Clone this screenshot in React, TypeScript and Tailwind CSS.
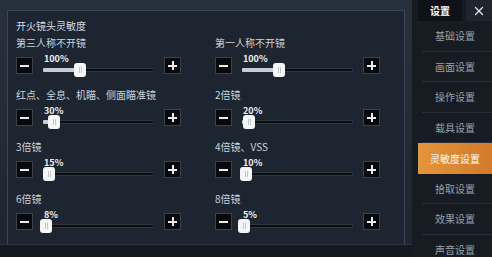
import { X } from 'lucide-react';

type Sens = { label: string; pct: number };

const rows: Sens[][] = [
    [{ label: '第三人称不开镜', pct: 100 }, { label: '第一人称不开镜', pct: 100 }],
    [{ label: '红点、全息、机瞄、侧面瞄准镜', pct: 30 }, { label: '2倍镜', pct: 20 }],
    [{ label: '3倍镜', pct: 15 }, { label: '4倍镜、VSS', pct: 10 }],
    [{ label: '6倍镜', pct: 8 }, { label: '8倍镜', pct: 5 }],
];

const menu = ['基础设置', '画面设置', '操作设置', '载具设置', '灵敏度设置', '拾取设置', '效果设置', '声音设置'];

const StepButton = ({ plus }: { plus?: boolean }) => (
    <div className="relative w-[17px] h-[17px] shrink-0 bg-[#07090c] border border-[#3b424b]">
        <span className="absolute left-[3px] right-[3px] top-[7px] h-[2px] bg-[#e8eaec]" />
        {plus && <span className="absolute top-[3px] bottom-[3px] left-[7px] w-[2px] bg-[#e8eaec]" />}
    </div>
);

const Slider = ({ item }: { item: Sens }) => {
    // slider range goes up to 300%
    const center = Math.round((111 * item.pct) / 300);
    return (
        <div className="flex flex-col gap-[7px]">
            <p className="h-[14px] leading-[14px] text-[10px] text-[#cfd3d8]">{item.label}</p>
            <div className="flex items-center gap-[10px] h-[17px]">
                <StepButton />
                <div className="relative w-[111px] h-[17px]">
                    <span className="absolute left-[1px] top-[-4px] text-[9px] font-bold text-[#eef0f2] leading-[12px]">{item.pct}%</span>
                    <div className="absolute left-0 right-0 top-[11px] h-[4px] bg-[#0a0c0f] border border-[#30363e] rounded-[1px]" />
                    <div className="absolute left-0 top-[11px] h-[4px] bg-[#c9cdd1] rounded-l-[1px]" style={{ width: center }} />
                    <div
                        className="absolute top-[6px] w-[12px] h-[14px] bg-[#f4f5f6] rounded-[3px] flex items-center justify-center gap-[1px]"
                        style={{ left: Math.max(center - 6, -5) }}
                    >
                        <span className="w-[1px] h-[6px] bg-[#c2c6cb]" />
                        <span className="w-[1px] h-[6px] bg-[#c2c6cb]" />
                    </div>
                </div>
                <StepButton plus />
            </div>
        </div>
    );
};

const App = () => {
    return (
        <div className="flex w-[492px] h-[257px] overflow-hidden bg-[#1b222c] font-['Noto_Sans_CJK_SC','Noto_Sans',sans-serif]">
            <main className="flex flex-col w-[412px] bg-gradient-to-b from-[#27313d] to-[#1d2530]">
                <div className="flex-1 flex flex-col mt-[10px] ml-[7px] mr-[7px] border-l border-t border-r border-[#3a4653] bg-[#1d2530]">
                    <h2 className="pl-[8px] pt-[9px] h-[25px] text-[10px] text-[#d9dde1] leading-[12px]">开火镜头灵敏度</h2>
                    <div className="flex flex-col">
                        {rows.map((pair, i) => (
                            <div key={i} className="flex gap-[34px] pl-[8px] h-[52px]">
                                <Slider item={pair[0]} />
                                <Slider item={pair[1]} />
                            </div>
                        ))}
                    </div>
                </div>
                <div className="h-[19px] bg-[#151a21] border-t border-[#2b333d]" />
            </main>

            <aside className="flex flex-col w-[80px] bg-[#171c23] overflow-hidden">
                <div className="flex h-[21px] shrink-0">
                    <div className="ml-[6px] w-[44px] bg-[#0e1217] flex items-center justify-center text-[10px] font-bold text-white">设置</div>
                    <div className="flex-1 ml-[4px] bg-[#1f252d] flex items-center justify-center">
                        <X size={14} strokeWidth={2.2} className="text-[#e6e8ea]" />
                    </div>
                </div>
                {menu.map((m) => (
                    m === '灵敏度设置' ? (
                        <div key={m} className="shrink-0 ml-[6px] h-[30.5px] flex items-center justify-center text-[10px] text-white bg-gradient-to-r from-[#e5953c] to-[#d2792a]">
                            {m}
                        </div>
                    ) : (
                        <div key={m} className="shrink-0 ml-[10px] h-[30.5px] flex items-center justify-center pr-[4px] text-[10px] text-[#9aa1a9] border-b border-[#2a3038]">
                            {m}
                        </div>
                    )
                ))}
            </aside>
        </div>
    );
};

export default App;
